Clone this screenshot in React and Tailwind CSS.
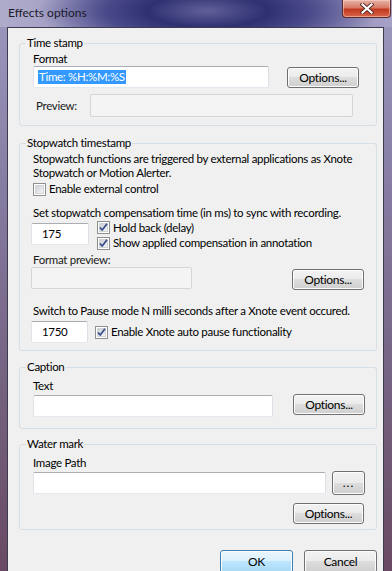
import React from 'react'

const font = { fontFamily: 'Lato, "Liberation Sans", sans-serif' }

const Button = ({ children, className = "", primary = false }) => (
    <div className={`flex items-center justify-center rounded-[3px] border text-[12px] text-black ${primary
        ? "border-[#3c7fb1] bg-[linear-gradient(180deg,#eaf6fd_0%,#d9f0fc_50%,#bee6fd_50%,#a7d9f5_100%)] shadow-[inset_0_0_0_1px_#fcfcfc]"
        : "border-[#707070] bg-[linear-gradient(180deg,#f2f2f2_0%,#ebebeb_50%,#dddddd_50%,#cfcfcf_100%)] shadow-[inset_0_0_0_1px_#fcfcfc]"} ${className}`}>
        {children}
    </div>
)

const TextBox = ({ className = "", children, disabled = false }) => (
    <div className={`flex items-center rounded-[2px] border ${disabled
        ? "border-[#d5d5d5] bg-[#f4f4f4]"
        : "border-[#e3e9ef] border-t-[#abadb3] border-l-[#e2e3ea] border-r-[#dbdfe6] bg-white"} ${className}`}>
        {children}
    </div>
)

const Check = ({ checked }) => (
    <svg width="13" height="13" viewBox="0 0 13 13" className="shrink-0">
        <defs>
            <linearGradient id="cbfill" x1="0" y1="0" x2="1" y2="1">
                <stop offset="0" stopColor="#cbcfd5" />
                <stop offset="1" stopColor="#f6f6f6" />
            </linearGradient>
        </defs>
        <rect x="0.5" y="0.5" width="12" height="12" fill="#fff" stroke="#8e8f8f" />
        <rect x="2.5" y="2.5" width="8" height="8" fill="url(#cbfill)" stroke="#d0d3d8" />
        {checked && (
            <path d="M3 6.5 L5.2 9 L10 2.8" fill="none" stroke="#3b4f8c" strokeWidth="1.8" strokeLinejoin="round" />
        )}
    </svg>
)

const CheckRow = ({ checked, label, className = "" }) => (
    <div className={`flex items-center gap-[3px] whitespace-nowrap ${className}`}>
        <Check checked={checked} />
        <span className="leading-[14px]">{label}</span>
    </div>
)

const Group = ({ title, className = "", children }) => (
    <fieldset className={`ml-[11px] w-[358px] min-w-0 rounded-[3px] border border-[#d5dfe5] ${className}`}>
        <legend className="ml-[6px] px-[1px] leading-[14px]">{title}</legend>
        {children}
    </fieldset>
)

export default function App() {
    return (
        <div style={font} className="relative h-[571px] w-[392px] overflow-hidden bg-[linear-gradient(180deg,#9d99bf_0%,#857aa0_35%,#73607e_70%,#6a4a62_100%)] text-[11.5px] tracking-[-0.3px] text-black">
            {/* title bar */}
            <div className="flex h-[27px] items-start bg-[radial-gradient(ellipse_170px_48px_at_53%_40%,#2a2b69_0%,#30327340_0%,#2e3071_35%,#4a4a8a_60%,transparent_100%),linear-gradient(90deg,#aeabcb_0%,#a19dc3_22%,#7774aa_42%,#6e6ba4_62%,#8e8ab7_80%,#a6a2c6_100%)]">
                <div className="ml-[8px] mt-[5px] text-[12px] leading-[16px] tracking-normal text-[#1a1a2a]">Effects options</div>
                <div className="ml-auto mr-[1px] flex h-[18px] w-[49px] items-center justify-center rounded-b-[4px] border border-t-0 border-[#5b2a2a] bg-[linear-gradient(180deg,#e6b3a8_0%,#d67a66_45%,#c2391f_55%,#d7664c_100%)] shadow-[inset_0_0_0_1px_rgba(255,220,210,0.5)]">
                    <svg width="14" height="11" viewBox="0 0 14 11">
                        <path d="M2.5 1.5 L11.5 9.5 M11.5 1.5 L2.5 9.5" stroke="#5a2a24" strokeWidth="4" strokeLinecap="square" />
                        <path d="M2.5 1.5 L11.5 9.5 M11.5 1.5 L2.5 9.5" stroke="#ffffff" strokeWidth="2.2" strokeLinecap="square" />
                    </svg>
                </div>
            </div>

            <div className="flex">
                <div className="w-[7px] shrink-0" />
                <div className="h-[560px] w-[377px] shrink-0 border-l border-r border-t border-[#3e3b4e] bg-[#f0f0f0]">
                    {/* Time stamp */}
                    <Group title="Time stamp" className="mt-[8px] pb-[8px]">
                        <div className="ml-[13px] mt-[2px] h-[14px] leading-[14px]">Format</div>
                        <div className="flex">
                            <TextBox className="ml-[13px] h-[22px] w-[236px] pl-[4px]">
                                <span className="bg-[#3399ff] px-[1px] leading-[14px] text-white">Time: %H:%M:%S</span>
                            </TextBox>
                            <Button className="ml-[18px] mt-[1px] h-[21px] w-[72px]">Options...</Button>
                        </div>
                        <div className="mt-[6px] flex h-[23px] items-center">
                            <span className="ml-[16px] w-[54px] text-[#1a1a1a]">Preview:</span>
                            <TextBox disabled className="h-[23px] w-[263px]" />
                        </div>
                    </Group>

                    {/* Stopwatch timestamp */}
                    <Group title="Stopwatch timestamp" className="mt-[10px] pb-[7px]">
                        <div className="ml-[13px] mt-[2px] whitespace-nowrap leading-[14px]">
                            Stopwatch functions are triggered by external applications as Xnote<br />
                            Stopwatch or Motion Alerter.
                        </div>
                        <CheckRow className="ml-[13px] mt-[2px] h-[14px]" label="Enable external control" />
                        <div className="ml-[13px] mt-[10px] h-[14px] whitespace-nowrap leading-[14px]">Set stopwatch compensatiom time (in ms) to sync with recording.</div>
                        <div className="flex items-start">
                            <TextBox className="ml-[11px] mt-[3px] h-[22px] w-[58px] pl-[10px]">175</TextBox>
                            <div className="ml-[8px] flex flex-col">
                                <CheckRow checked className="h-[15px]" label="Hold back (delay)" />
                                <CheckRow checked className="h-[16px]" label="Show applied compensation in annotation" />
                            </div>
                        </div>
                        <div className="ml-[13px] mt-[2px] h-[14px] leading-[14px] text-[#1a1a1a]">Format preview:</div>
                        <div className="flex items-start">
                            <TextBox disabled className="ml-[11px] h-[22px] w-[161px]" />
                            <Button className="ml-[100px] mt-[2px] h-[21px] w-[72px]">Options...</Button>
                        </div>
                        <div className="ml-[13px] mt-[14px] h-[14px] whitespace-nowrap leading-[14px]">Switch to Pause mode N milli seconds after a Xnote event occured.</div>
                        <div className="mt-[3px] flex items-center">
                            <TextBox className="ml-[11px] h-[22px] w-[57px] pl-[10px]">1750</TextBox>
                            <CheckRow checked className="ml-[7px]" label="Enable Xnote auto pause functionality" />
                        </div>
                    </Group>

                    {/* Caption */}
                    <Group title="Caption" className="mt-[9px] pb-[11px]">
                        <div className="ml-[13px] mt-[5px] h-[14px] leading-[14px]">Text</div>
                        <div className="mt-[1px] flex items-start">
                            <TextBox className="ml-[13px] mt-[1px] h-[22px] w-[240px]" />
                            <Button className="ml-[20px] h-[21px] w-[72px]">Options...</Button>
                        </div>
                    </Group>

                    {/* Water mark */}
                    <Group title="Water mark" className="mt-[8px] pb-[5px]">
                        <div className="ml-[13px] mt-[5px] h-[14px] leading-[14px]">Image Path</div>
                        <div className="mt-[1px] flex items-start">
                            <TextBox className="ml-[13px] mt-[1px] h-[22px] w-[293px]" />
                            <Button className="ml-[6px] h-[24px] w-[33px] text-[10px] tracking-[1px]">...</Button>
                        </div>
                        <Button className="ml-[273px] mt-[8px] h-[21px] w-[71px]">Options...</Button>
                    </Group>

                    <div className="mr-[6px] mt-[20px] flex justify-end gap-[11px]">
                        <Button primary className="h-[23px] w-[73px]">OK</Button>
                        <Button className="h-[23px] w-[73px]">Cancel</Button>
                    </div>
                </div>
                <div className="w-[8px] shrink-0" />
            </div>
        </div>
    )
}
